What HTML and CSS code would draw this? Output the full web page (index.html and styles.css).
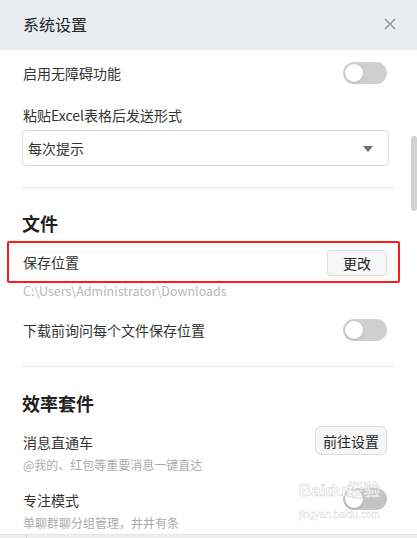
FILE: index.html
```html
<!DOCTYPE html>
<html lang="zh-CN">
<head>
<meta charset="utf-8">
<title>系统设置</title>
<link rel="stylesheet" href="styles.css">
</head>
<body>
<div class="window">
  <header class="header">
    <span class="title">系统设置</span>
    <svg class="close" width="12" height="12" viewBox="0 0 12 12"><path d="M1 1L11 11M11 1L1 11" stroke="#8a8d93" stroke-width="1.3" fill="none"/></svg>
  </header>
  <main class="content">
    <div class="row row-first">
      <span class="label">启用无障碍功能</span>
      <span class="toggle"><span class="knob"></span></span>
    </div>
    <div class="field-label">粘贴Excel表格后发送形式</div>
    <div class="select">
      <span>每次提示</span>
      <span class="caret"></span>
    </div>
    <div class="divider div1"></div>
    <h2 class="section s1">文件</h2>
    <div class="row row-save highlighted">
      <span class="label">保存位置</span>
      <button class="btn btn-small">更改</button>
    </div>
    <div class="path">C:\Users\Administrator\Downloads</div>
    <div class="row row-ask">
      <span class="label">下载前询问每个文件保存位置</span>
      <span class="toggle"><span class="knob"></span></span>
    </div>
    <div class="divider div2"></div>
    <h2 class="section s2">效率套件</h2>
    <div class="item">
      <div class="item-text">
        <div class="label">消息直通车</div>
        <div class="desc">@我的、红包等重要消息一键直达</div>
      </div>
      <button class="btn btn-large">前往设置</button>
    </div>
    <div class="item">
      <div class="item-text">
        <div class="label">专注模式</div>
        <div class="desc">单聊群聊分组管理，井井有条</div>
      </div>
      <span class="toggle toggle-item"><span class="knob"></span></span>
    </div>
  </main>
  <div class="scrollbar"></div>
  <div class="watermark">
    <span class="wm-logo">Baidu经验</span>
    <span class="wm-url">jingyan.baidu.com</span>
  </div>
  <div class="bottom-edge"><span class="edge-tick"></span></div>
</div>
</body>
</html>
```

FILE: styles.css
```css
* { box-sizing: border-box; }
html, body {
  margin: 0;
  padding: 0;
  background: #ffffff;
}
body {
  font-family: "Noto Sans CJK SC", "Microsoft YaHei", "Liberation Sans", sans-serif;
  color: #333333;
}
.window {
  position: relative;
  width: 417px;
  height: 538px;
  overflow: hidden;
  background: #ffffff;
}
.header {
  height: 50px;
  background: #e9ecf1;
  display: flex;
  align-items: center;
  justify-content: space-between;
  padding: 0 21px 3px 23px;
}
.title {
  font-size: 16px;
  line-height: 22px;
  color: #222;
}
.close { display: block; margin-top: 1px; }
.content {
  padding: 0 23px 0 22px;
}
.row {
  display: flex;
  align-items: center;
  justify-content: space-between;
  padding-left: 1px;
  padding-right: 7px;
}
.label {
  font-size: 14px;
  line-height: 22px;
  color: #333;
}
.row-first { height: 46px; }
.toggle {
  width: 44px;
  height: 22px;
  border-radius: 11px;
  background: #cfcfcf;
  padding: 2px;
  display: flex;
}
.knob {
  width: 18px;
  height: 18px;
  border-radius: 50%;
  background: #fff;
  box-shadow: 0 1px 2px rgba(0,0,0,0.15);
}
.field-label {
  margin-top: 9px;
  padding-left: 1px;
  font-size: 14px;
  line-height: 20px;
  color: #333;
}
.select {
  margin-top: 5px;
  width: 367px;
  height: 36px;
  border: 1px solid #dcdcdc;
  border-radius: 4px;
  display: flex;
  align-items: center;
  justify-content: space-between;
  padding: 0 15px 0 5px;
  font-size: 14px;
  color: #333;
}
.caret {
  width: 0;
  height: 0;
  border-left: 5px solid transparent;
  border-right: 5px solid transparent;
  border-top: 6px solid #6f6f6f;
  margin-top: 1px;
}
.divider {
  height: 1px;
  background: #ebebeb;
}
.div1 { margin-top: 21px; }
.div2 { margin-top: 16px; }
.section {
  margin: 0;
  font-size: 18px;
  line-height: 26px;
  font-weight: 700;
  color: #222;
}
.s1 { margin-top: 22px; }
.s2 { margin-top: 23px; }
.row-save {
  height: 42px;
  margin-top: 5px;
  position: relative;
}
.highlighted::after {
  content: "";
  position: absolute;
  left: -15px;
  right: -6px;
  top: 0;
  bottom: 0;
  border: 2px solid #ff1a1a;
  border-radius: 2px;
}
.btn {
  font-family: inherit;
  font-size: 14px;
  color: #222;
  background: #f6f6f6;
  border: 1px solid #dcdcdc;
  padding: 0;
  cursor: pointer;
}
.btn-small {
  width: 60px;
  height: 26px;
  border-radius: 4px;
  margin-top: 1px;
}
.btn-large {
  width: 72px;
  height: 29px;
  border-radius: 6px;
  margin-right: 7px;
}
.path {
  padding-left: 1px;
  font-size: 12.5px;
  line-height: 16px;
  color: #b7b7b7;
}
.row-ask {
  height: 40px;
  margin-top: 11px;
}
.item {
  margin-top: 10px;
  display: flex;
  justify-content: space-between;
  align-items: flex-start;
  padding-left: 1px;
}
.item-text {
  padding-top: 5px;
}
.desc {
  margin-top: 3px;
  font-size: 12px;
  line-height: 18px;
  color: #ababab;
}
.toggle-item {
  margin-top: 4px;
  margin-right: 7px;
  background: #c4c4c4;
}
.scrollbar {
  position: absolute;
  left: 411px;
  top: 136px;
  width: 6px;
  height: 75px;
  border-radius: 3px;
  background: #d2d2d2;
}
.watermark {
  position: absolute;
  left: 299px;
  top: 480px;
  width: 95px;
  display: flex;
  flex-direction: column;
  align-items: flex-start;
  pointer-events: none;
  white-space: nowrap;
}
.wm-logo {
  font-family: "Liberation Sans", "Noto Sans CJK SC", sans-serif;
  font-size: 17px;
  line-height: 22px;
  font-weight: 700;
  color: rgba(255,255,255,0.85);
  -webkit-text-stroke: 0.6px #d6d6d6;
}
.wm-url {
  font-family: "Liberation Sans", sans-serif;
  font-size: 10px;
  line-height: 13px;
  margin-top: 6px;
  color: rgba(255,255,255,0.9);
  -webkit-text-stroke: 0.4px #dcdcdc;
}
.bottom-edge {
  position: absolute;
  left: 0;
  right: 0;
  bottom: 0;
  height: 4px;
  background: #efefef;
  border-top: 1px solid #e4e4e4;
}
.edge-tick {
  position: absolute;
  left: 26px;
  top: 0;
  width: 1px;
  height: 4px;
  background: #cfcfcf;
}
```
